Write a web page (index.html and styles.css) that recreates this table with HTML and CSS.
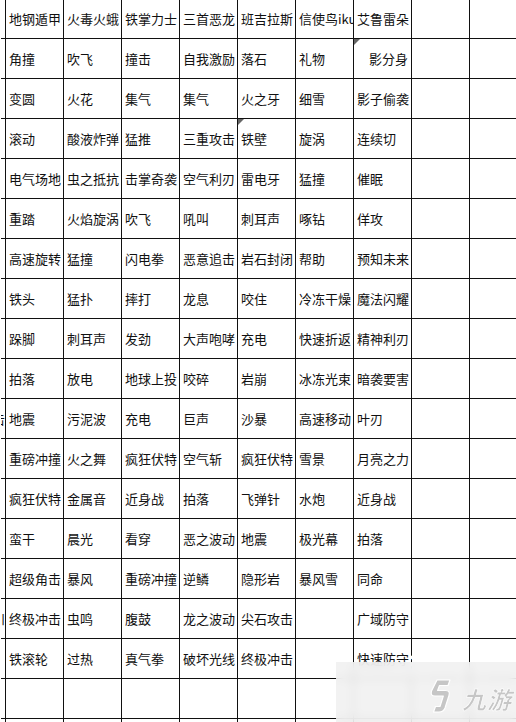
FILE: index.html
```html
<!DOCTYPE html>
<html lang="zh">
<head>
<meta charset="utf-8">
<title>技能表</title>
<link rel="stylesheet" href="styles.css">
</head>
<body>
<div class="sheet">
  <div class="row"><div class="c c0"></div><div class="c">地钢遁甲</div><div class="c">火毒火蛾</div><div class="c">铁掌力士</div><div class="c">三首恶龙</div><div class="c">班吉拉斯</div><div class="c">信使鸟iku</div><div class="c">艾鲁雷朵</div><div class="c"></div><div class="c"></div></div>
  <div class="row"><div class="c c0"></div><div class="c">角撞</div><div class="c">吹飞</div><div class="c">撞击</div><div class="c">自我激励</div><div class="c">落石</div><div class="c">礼物</div><div class="c note indent">影分身</div><div class="c"></div><div class="c"></div></div>
  <div class="row"><div class="c c0"></div><div class="c">变圆</div><div class="c">火花</div><div class="c">集气</div><div class="c">集气</div><div class="c">火之牙</div><div class="c">细雪</div><div class="c">影子偷袭</div><div class="c"></div><div class="c"></div></div>
  <div class="row"><div class="c c0"></div><div class="c">滚动</div><div class="c">酸液炸弹</div><div class="c">猛推</div><div class="c">三重攻击</div><div class="c note">铁壁</div><div class="c">旋涡</div><div class="c">连续切</div><div class="c"></div><div class="c"></div></div>
  <div class="row"><div class="c c0"></div><div class="c">电气场地</div><div class="c">虫之抵抗</div><div class="c">击掌奇袭</div><div class="c">空气利刃</div><div class="c">雷电牙</div><div class="c">猛撞</div><div class="c">催眠</div><div class="c"></div><div class="c"></div></div>
  <div class="row"><div class="c c0"></div><div class="c">重踏</div><div class="c">火焰旋涡</div><div class="c">吹飞</div><div class="c">吼叫</div><div class="c">刺耳声</div><div class="c">啄钻</div><div class="c">佯攻</div><div class="c"></div><div class="c"></div></div>
  <div class="row"><div class="c c0"></div><div class="c">高速旋转</div><div class="c">猛撞</div><div class="c">闪电拳</div><div class="c">恶意追击</div><div class="c">岩石封闭</div><div class="c">帮助</div><div class="c">预知未来</div><div class="c"></div><div class="c"></div></div>
  <div class="row"><div class="c c0"></div><div class="c">铁头</div><div class="c">猛扑</div><div class="c">摔打</div><div class="c">龙息</div><div class="c">咬住</div><div class="c">冷冻干燥</div><div class="c">魔法闪耀</div><div class="c"></div><div class="c"></div></div>
  <div class="row"><div class="c c0"></div><div class="c">跺脚</div><div class="c">刺耳声</div><div class="c">发劲</div><div class="c">大声咆哮</div><div class="c">充电</div><div class="c">快速折返</div><div class="c">精神利刃</div><div class="c"></div><div class="c"></div></div>
  <div class="row"><div class="c c0"></div><div class="c">拍落</div><div class="c">放电</div><div class="c">地球上投</div><div class="c">咬碎</div><div class="c">岩崩</div><div class="c">冰冻光束</div><div class="c">暗袭要害</div><div class="c"></div><div class="c"></div></div>
  <div class="row"><div class="c c0">击</div><div class="c">地震</div><div class="c">污泥波</div><div class="c">充电</div><div class="c">巨声</div><div class="c">沙暴</div><div class="c">高速移动</div><div class="c">叶刃</div><div class="c"></div><div class="c"></div></div>
  <div class="row"><div class="c c0"></div><div class="c">重磅冲撞</div><div class="c">火之舞</div><div class="c">疯狂伏特</div><div class="c">空气斩</div><div class="c">疯狂伏特</div><div class="c">雪景</div><div class="c">月亮之力</div><div class="c"></div><div class="c"></div></div>
  <div class="row"><div class="c c0"></div><div class="c">疯狂伏特</div><div class="c">金属音</div><div class="c">近身战</div><div class="c">拍落</div><div class="c">飞弹针</div><div class="c">水炮</div><div class="c">近身战</div><div class="c"></div><div class="c"></div></div>
  <div class="row"><div class="c c0"></div><div class="c">蛮干</div><div class="c">晨光</div><div class="c">看穿</div><div class="c">恶之波动</div><div class="c">地震</div><div class="c">极光幕</div><div class="c">拍落</div><div class="c"></div><div class="c"></div></div>
  <div class="row"><div class="c c0"></div><div class="c">超级角击</div><div class="c">暴风</div><div class="c">重磅冲撞</div><div class="c">逆鳞</div><div class="c">隐形岩</div><div class="c">暴风雪</div><div class="c">同命</div><div class="c"></div><div class="c"></div></div>
  <div class="row"><div class="c c0">川</div><div class="c">终极冲击</div><div class="c">虫鸣</div><div class="c">腹鼓</div><div class="c">龙之波动</div><div class="c">尖石攻击</div><div class="c"></div><div class="c">广域防守</div><div class="c"></div><div class="c"></div></div>
  <div class="row"><div class="c c0"></div><div class="c">铁滚轮</div><div class="c">过热</div><div class="c">真气拳</div><div class="c">破坏光线</div><div class="c">终极冲击</div><div class="c"></div><div class="c">快速防守</div><div class="c"></div><div class="c"></div></div>
  <div class="row"><div class="c c0"></div><div class="c"></div><div class="c"></div><div class="c"></div><div class="c"></div><div class="c"></div><div class="c"></div><div class="c"></div><div class="c"></div><div class="c"></div></div>
  <div class="row"><div class="c c0"></div><div class="c"></div><div class="c"></div><div class="c"></div><div class="c"></div><div class="c"></div><div class="c"></div><div class="c"></div><div class="c"></div><div class="c"></div></div>
</div>

<div class="mark-text">游戏中心</div>
<div class="watermark">
  <svg class="wm-logo" viewBox="0 0 24 36" width="24" height="36" aria-hidden="true">
    <path d="M9 2 L22 2 L20 7.5 L11.5 7.5 L9.6 12.5 L17.5 12.5 Q22.5 12.5 21 17.5 L17 30 Q15.5 34 11 34 L5.5 34 L7.5 28.5 L12 28.5 L15.3 18 L7 18 Q2 18 3.5 13 Z" fill="#c6c6c6" stroke="#ffffff" stroke-width="1.2" stroke-linejoin="round"/>
  </svg>
  <span class="wm-text">九游</span>
</div>
</body>
</html>
```

FILE: styles.css
```css
html, body {
  margin: 0;
  padding: 0;
  background: #ffffff;
}

body {
  width: 516px;
  height: 722px;
  overflow: hidden;
  position: relative;
  font-family: "Noto Sans CJK SC", "DejaVu Sans", sans-serif;
  font-size: 13px;
  color: #111111;
}

.sheet {
  margin-top: -1px;
  margin-left: 1px;
  width: 515px;
  overflow: hidden;
}

.row {
  display: flex;
  height: 40px;
}

.c {
  flex: none;
  width: 58px;
  height: 40px;
  box-sizing: border-box;
  border-right: 1px solid #111111;
  border-bottom: 1px solid #111111;
  display: flex;
  align-items: center;
  padding-left: 3px;
  white-space: nowrap;
  overflow: hidden;
  position: relative;
}

.c0 {
  width: 5px;
  padding-left: 0;
  justify-content: flex-end;
}

.indent {
  padding-left: 15px;
}

.note::before {
  content: "";
  position: absolute;
  left: 0;
  top: 0;
  width: 0;
  height: 0;
  border-top: 6px solid #666666;
  border-right: 6px solid transparent;
}

.mark-text {
  position: absolute;
  left: 408px;
  top: 648px;
  font-size: 24px;
  font-weight: 700;
  letter-spacing: 8px;
  color: #ffffff;
  white-space: nowrap;
}

.watermark {
  position: absolute;
  left: 336px;
  top: 662px;
  width: 180px;
  height: 60px;
  background: rgba(240, 240, 240, 0.85);
  backdrop-filter: blur(4px);
  display: flex;
  align-items: center;
  justify-content: flex-end;
  gap: 10px;
  padding-right: 4px;
  box-sizing: border-box;
}

.wm-logo {
  margin-top: 8px;
}

.wm-text {
  font-size: 24px;
  font-style: italic;
  font-weight: 700;
  color: #c6c6c6;
  letter-spacing: 1px;
  margin-top: 12px;
  -webkit-text-stroke: 0.6px #ffffff;
}
```
